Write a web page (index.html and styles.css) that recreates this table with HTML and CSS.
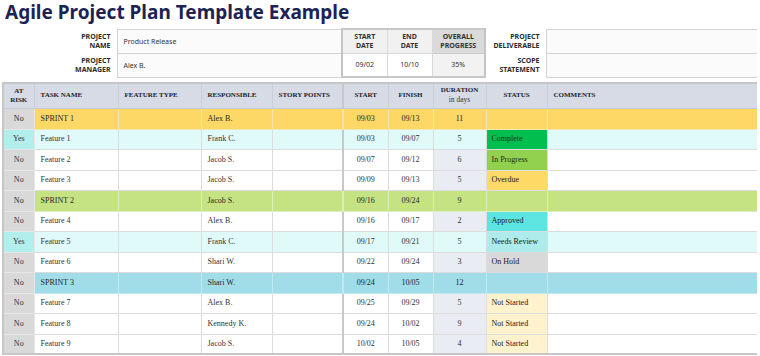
FILE: index.html
```html
<!DOCTYPE html>
<html lang="en">
<head>
<meta charset="utf-8">
<title>Agile Project Plan Template Example</title>
<link rel="stylesheet" href="styles.css">
</head>
<body>
<h1 class="title">Agile Project Plan Template Example</h1>
<table class="info">
  <colgroup>
    <col class="c-lab"><col class="c-val"><col class="c-d"><col class="c-d"><col class="c-p"><col class="c-lab2"><col class="c-val2">
  </colgroup>
  <tr>
    <th class="lab">PROJECT<br>NAME</th>
    <td class="val">Product Release</td>
    <th class="dh first">START<br>DATE</th>
    <th class="dh">END<br>DATE</th>
    <th class="ph">OVERALL<br>PROGRESS</th>
    <th class="lab">PROJECT<br>DELIVERABLE</th>
    <td class="val"></td>
  </tr>
  <tr>
    <th class="lab">PROJECT<br>MANAGER</th>
    <td class="val">Alex B.</td>
    <td class="dv first">09/02</td>
    <td class="dv">10/10</td>
    <td class="pv">35%</td>
    <th class="lab">SCOPE<br>STATEMENT</th>
    <td class="val"></td>
  </tr>
</table>
<table class="plan">
  <colgroup>
    <col class="w-risk"><col class="w-task"><col class="w-type"><col class="w-resp"><col class="w-pts"><col class="w-date"><col class="w-date"><col class="w-dur"><col class="w-stat"><col class="w-com">
  </colgroup>
  <thead>
    <tr>
      <th class="ctr">AT<br>RISK</th>
      <th>TASK NAME</th>
      <th>FEATURE TYPE</th>
      <th>RESPONSIBLE</th>
      <th>STORY POINTS</th>
      <th class="ctr sep">START</th>
      <th class="ctr">FINISH</th>
      <th class="ctr">DURATION<br><span class="sub">in days</span></th>
      <th class="ctr">STATUS</th>
      <th>COMMENTS</th>
    </tr>
  </thead>
  <tbody>
    <tr class="sprint s1"><td class="risk">No</td><td>SPRINT 1</td><td></td><td>Alex B.</td><td></td><td class="ctr sep">09/03</td><td class="ctr">09/13</td><td class="ctr dur">11</td><td></td><td></td></tr>
    <tr class="hot"><td class="risk yes">Yes</td><td>Feature 1</td><td></td><td>Frank C.</td><td></td><td class="ctr sep">09/03</td><td class="ctr">09/07</td><td class="ctr dur">5</td><td class="st complete">Complete</td><td></td></tr>
    <tr><td class="risk">No</td><td>Feature 2</td><td></td><td>Jacob S.</td><td></td><td class="ctr sep">09/07</td><td class="ctr">09/12</td><td class="ctr dur">6</td><td class="st progress">In Progress</td><td></td></tr>
    <tr><td class="risk">No</td><td>Feature 3</td><td></td><td>Jacob S.</td><td></td><td class="ctr sep">09/09</td><td class="ctr">09/13</td><td class="ctr dur">5</td><td class="st overdue">Overdue</td><td></td></tr>
    <tr class="sprint s2"><td class="risk">No</td><td>SPRINT 2</td><td></td><td>Jacob S.</td><td></td><td class="ctr sep">09/16</td><td class="ctr">09/24</td><td class="ctr dur">9</td><td></td><td></td></tr>
    <tr><td class="risk">No</td><td>Feature 4</td><td></td><td>Alex B.</td><td></td><td class="ctr sep">09/16</td><td class="ctr">09/17</td><td class="ctr dur">2</td><td class="st approved">Approved</td><td></td></tr>
    <tr class="hot"><td class="risk yes">Yes</td><td>Feature 5</td><td></td><td>Frank C.</td><td></td><td class="ctr sep">09/17</td><td class="ctr">09/21</td><td class="ctr dur">5</td><td class="st review">Needs Review</td><td></td></tr>
    <tr><td class="risk">No</td><td>Feature 6</td><td></td><td>Shari W.</td><td></td><td class="ctr sep">09/22</td><td class="ctr">09/24</td><td class="ctr dur">3</td><td class="st hold">On Hold</td><td></td></tr>
    <tr class="sprint s3"><td class="risk">No</td><td>SPRINT 3</td><td></td><td>Shari W.</td><td></td><td class="ctr sep">09/24</td><td class="ctr">10/05</td><td class="ctr dur">12</td><td></td><td></td></tr>
    <tr><td class="risk">No</td><td>Feature 7</td><td></td><td>Alex B.</td><td></td><td class="ctr sep">09/25</td><td class="ctr">09/29</td><td class="ctr dur">5</td><td class="st notstarted">Not Started</td><td></td></tr>
    <tr><td class="risk">No</td><td>Feature 8</td><td></td><td>Kennedy K.</td><td></td><td class="ctr sep">09/24</td><td class="ctr">10/02</td><td class="ctr dur">9</td><td class="st notstarted">Not Started</td><td></td></tr>
    <tr><td class="risk">No</td><td>Feature 9</td><td></td><td>Jacob S.</td><td></td><td class="ctr sep">10/02</td><td class="ctr">10/05</td><td class="ctr dur">4</td><td class="st notstarted">Not Started</td><td></td></tr>
  </tbody>
</table>
</body>
</html>
```
FILE: styles.css
```css
html, body {
  margin: 0;
  padding: 0;
  background: #ffffff;
}
body {
  padding-left: 2px;
  width: 755px;
  font-family: "Noto Sans", "Open Sans", sans-serif;
}
.title {
  margin: 0;
  padding: 1px 0 0 3px;
  height: 27px;
  font: 700 19px/22px "Noto Sans", sans-serif;
  color: #1c2354;
  white-space: nowrap;
}

/* ---- info block ---- */
.info {
  width: 755px;
  table-layout: fixed;
  border-collapse: collapse;
  margin-bottom: 4px;
}
.c-lab { width: 115px; }
.c-val { width: 225px; }
.c-d { width: 45px; }
.c-p { width: 53px; }
.c-lab2 { width: 61px; }
.c-val2 { width: 211px; }
.info tr { height: 24px; }
.info th, .info td {
  padding: 0;
  font-size: 7px;
  line-height: 9px;
  color: #333333;
}
.info .lab {
  text-align: right;
  padding-right: 6px;
  font-weight: 700;
  color: #2b2b2b;
  background: #ffffff;
}
.info .val {
  border: 1px solid #d4d4d4;
  background: #fbfbfb;
  padding-left: 6px;
  font-weight: 400;
}
.info .dh {
  background: #f1f1f1;
  border: 1px solid #d9d9d9;
  font-weight: 700;
  text-align: center;
}
.info .ph {
  background: #dadada;
  border: 1px solid #cccccc;
  border-right: 2px solid #c4c4c4;
  font-weight: 700;
  text-align: center;
}
.info .dv {
  background: #ffffff;
  border: 1px solid #d9d9d9;
  text-align: center;
}
.info .pv {
  background: #f2f2f2;
  border: 1px solid #cccccc;
  border-right: 2px solid #c4c4c4;
  text-align: center;
}
.info .first { border-left: 2px solid #c4c4c4; }
.info tr:first-child .dh, .info tr:first-child .ph { border-top: 2px solid #c8c8c8; }
.info tr:last-child .dv, .info tr:last-child .pv { border-bottom: 2px solid #c8c8c8; }

/* ---- plan table ---- */
.plan {
  width: 755px;
  table-layout: fixed;
  border-collapse: collapse;
  border: 2px solid #c6c6c6;
  font-family: "Liberation Serif", "DejaVu Serif", serif;
  font-size: 8px;
  color: #333333;
}
.w-risk { width: 31px; }
.w-task { width: 84px; }
.w-type { width: 83px; }
.w-resp { width: 71px; }
.w-pts { width: 71px; }
.w-date { width: 45px; }
.w-dur { width: 53px; }
.w-stat { width: 61px; }
.w-com { width: 211px; }
.plan thead tr { height: 25px; }
.plan th {
  background: #d6dbe5;
  color: #1a1d2b;
  font-weight: 700;
  font-size: 7px;
  line-height: 9px;
  text-align: left;
  padding: 0 0 0 6px;
  border: 1px solid #c9ced8;
  border-bottom: 1px solid #c3c8d2;
}
.plan th.ctr, .plan td.ctr { text-align: center; padding-left: 0; }
.plan .sub { font-weight: 400; font-size: 7.5px; color: #333333; }
.plan tbody tr:nth-child(odd) { height: 21px; }
.plan tbody tr:nth-child(even) { height: 20px; }
.plan td {
  padding: 0 0 0 6px;
  border: 1px solid #dcdcdc;
  background: #ffffff;
  line-height: 10px;
  white-space: nowrap;
}
.plan .sep { border-left: 2px solid #c8c8c8; }
.plan td.risk {
  background: #d9d9d9;
  text-align: center;
  padding-left: 0;
  border-color: #e6e6e6;
}
.plan td.risk.yes { background: #b2efec; }
.plan td.dur { background: #e9ecf3; }

.plan tr.hot td { background: #e0f9f9; }
.plan tr.hot td.risk { background: #b2efec; }
.plan tr.sprint td { color: #262626; border-color: #ececec; }
.plan tr.s1 td { background: #fed866; border-color: #f4e6b0; }
.plan tr.s2 td { background: #c6e384; border-color: #dcedbe; }
.plan tr.s3 td { background: #a0dde9; border-color: #c4e8ef; }
.plan tr.sprint td.risk { background: #d9d9d9; border-color: #e6e6e6; }

.plan td.st { color: #1a1a1a; padding-left: 5px; }
.plan tr td.st.complete { background: #00bf4f; color: #0d3518; }
.plan tr td.st.progress { background: #92d050; color: #18330d; }
.plan tr td.st.overdue { background: #ffd966; }
.plan tr td.st.approved { background: #5ce5e1; }
.plan tr td.st.review { background: #aeebeb; }
.plan tr td.st.hold { background: #d9d9d9; }
.plan tr td.st.notstarted { background: #fff2cc; }
```
